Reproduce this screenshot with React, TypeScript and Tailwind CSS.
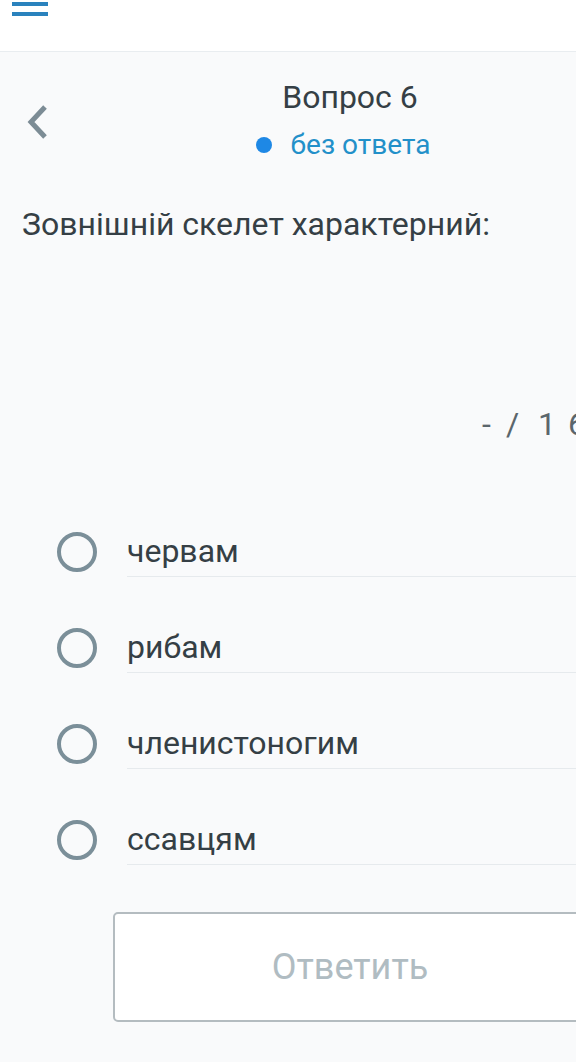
import React from "react";

const options = ["червам", "рибам", "членистоногим", "ссавцям"];

export default function App() {
  return (
    <div
      className="w-[576px] h-[1062px] overflow-hidden bg-[#f9fafb]"
      style={{ fontFamily: "Roboto, 'Noto Sans', sans-serif" }}
    >
      <div className="w-[700px]">
        <header className="h-[52px] bg-white border-b border-[#e9edf0] pl-[12px] pt-[2px] flex flex-col gap-[6px]">
          <div className="w-[36px] h-[4px] bg-[#2a82bd]" />
          <div className="w-[36px] h-[4px] bg-[#2a82bd]" />
        </header>

        <section className="grid grid-cols-[1fr_auto_1fr] pt-[28px]">
          <div className="pl-[26px] pt-[24px]">
            <svg width="24" height="36" viewBox="0 0 24 36" fill="none">
              <path
                d="M19 3 L5 18 L19 33"
                stroke="#7c8c95"
                strokeWidth="5"
                strokeLinecap="butt"
                strokeLinejoin="miter"
              />
            </svg>
          </div>
          <div className="flex flex-col items-center">
            <div className="text-[32px] leading-[34px] text-[#353f45]">Вопрос 6</div>
            <div className="flex items-center gap-[19px] mt-[14px] ml-[-14px]">
              <span className="w-[16px] h-[16px] rounded-full bg-[#1e88e5]" />
              <span className="text-[28px] leading-[34px] text-[#2290c9]">без ответа</span>
            </div>
          </div>
          <div />
        </section>

        <div className="mt-[45px] pl-[22px] text-[32px] leading-[34px] text-[#353f45]">
          Зовнішній скелет характерний:
        </div>

        <div className="mt-[166px] pl-[482px] flex text-[32px] leading-[34px] text-[#5b666c]">
          <span className="w-[24px]">-</span>
          <span className="w-[32px]">/</span>
          <span className="w-[30px]">1</span>
          <span>6</span>
        </div>

        <div className="mt-[85px] flex flex-col gap-[45px]">
          {options.map((o) => (
            <label key={o} className="flex items-center">
              <span className="ml-[57px] w-[40px] h-[40px] rounded-full border-[4px] border-[#7b8f99] shrink-0" />
              <span className="ml-[30px] flex-1 h-[51px] flex items-center border-b border-[#e6eaed] text-[32px] text-[#353f45]">
                {o}
              </span>
            </label>
          ))}
        </div>

        <button className="mt-[47px] ml-[113px] w-[474px] h-[110px] rounded-[5px] border-2 border-[#b4bcc0] bg-white flex items-center justify-center text-[36px] text-[#b0bcc2]">
          Ответить
        </button>
      </div>
    </div>
  );
}
